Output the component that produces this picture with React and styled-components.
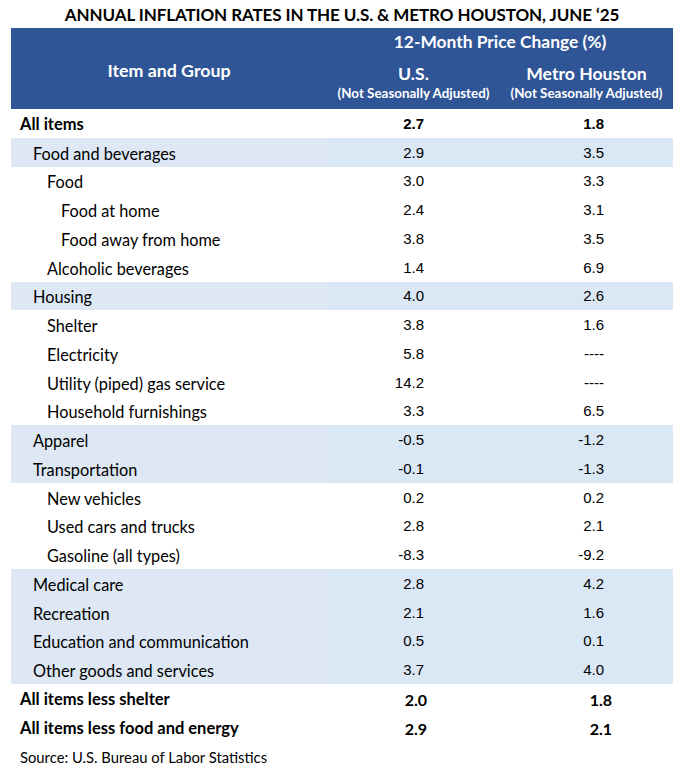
import React from "react";
import styled, { createGlobalStyle } from "styled-components";

const Global = createGlobalStyle`
  html, body { margin: 0; padding: 0; background: #ffffff; }
  body { font-family: Lato, "Open Sans", sans-serif; color: #000; }
`;

const Page = styled.div`
  width: 683px;
  padding: 0 10px 0 11px;
  box-sizing: border-box;
`;

const Title = styled.h1`
  margin: 0;
  height: 28px;
  display: flex;
  align-items: center;
  justify-content: center;
  font-family: Lato, sans-serif;
  font-weight: 700;
  font-size: 17px;
  letter-spacing: -0.1px;
  white-space: nowrap;
`;

const Head = styled.div`
  display: grid;
  grid-template-columns: 316px 173px 173px;
  grid-template-rows: 27px 31px 23px;
  height: 81px;
  background: #2f5597;
  color: #fff;
  font-weight: 700;
`;

const ItemHead = styled.div`
  grid-row: 1 / 4;
  display: flex;
  align-items: center;
  justify-content: center;
  padding-top: 2px;
  font-size: 17.8px;
`;

const SpanHead = styled.div`
  grid-column: 2 / 4;
  display: flex;
  align-items: center;
  justify-content: center;
  font-size: 17.4px;
  white-space: nowrap;
`;

const ColHead = styled.div`
  display: flex;
  align-items: ${(p) => (p.$sub ? "flex-start" : "center")};
  justify-content: center;
  font-size: ${(p) => (p.$sub ? "13.4px" : "17.6px")};
  line-height: ${(p) => (p.$sub ? "14px" : "normal")};
  padding-top: ${(p) => (p.$sub ? "0" : "5px")};
  white-space: nowrap;
`;

const Row = styled.div`
  display: grid;
  grid-template-columns: 316px 173px 173px;
  height: 28.75px;
  align-items: center;
  background: ${(p) => (p.$shade ? "#dae7f5" : "#fff")};
`;

const Label = styled.div`
  height: 100%;
  box-sizing: border-box;
  display: flex;
  align-items: center;
  padding-left: ${(p) => [9, 22, 36, 50][p.$level]}px;
  padding-top: 2px;
  font-size: ${(p) => (p.$bold ? "16.5px" : "16.3px")};
  font-weight: ${(p) => (p.$bold ? 700 : 400)};
  background: ${(p) => (p.$shade ? "#dde8f4" : "transparent")};
  white-space: nowrap;
`;

const Num = styled.div`
  text-align: right;
  padding-right: ${(p) => p.$pad}px;
  padding-top: ${(p) => (p.$alt ? "2px" : "0")};
  font-family: ${(p) =>
    p.$alt ? "Lato, sans-serif" : '"Liberation Sans", Arial, sans-serif'};
  font-size: ${(p) => (p.$alt ? "16px" : "15px")};
  font-weight: ${(p) => (p.$bold ? 700 : 400)};
`;

const Source = styled.div`
  height: 30px;
  display: flex;
  align-items: center;
  padding-left: 9px;
  font-size: 14.8px;
`;

const rows = [
  { l: "All items", lv: 0, b: true, us: "2.7", h: "1.8" },
  { l: "Food and beverages", lv: 1, s: true, us: "2.9", h: "3.5" },
  { l: "Food", lv: 2, us: "3.0", h: "3.3" },
  { l: "Food at home", lv: 3, us: "2.4", h: "3.1" },
  { l: "Food away from home", lv: 3, us: "3.8", h: "3.5" },
  { l: "Alcoholic beverages", lv: 2, us: "1.4", h: "6.9" },
  { l: "Housing", lv: 1, s: true, us: "4.0", h: "2.6" },
  { l: "Shelter", lv: 2, us: "3.8", h: "1.6" },
  { l: "Electricity", lv: 2, us: "5.8", h: "----" },
  { l: "Utility (piped) gas service", lv: 2, us: "14.2", h: "----" },
  { l: "Household furnishings", lv: 2, us: "3.3", h: "6.5" },
  { l: "Apparel", lv: 1, s: true, us: "-0.5", h: "-1.2" },
  { l: "Transportation", lv: 1, s: true, us: "-0.1", h: "-1.3" },
  { l: "New vehicles", lv: 2, us: "0.2", h: "0.2" },
  { l: "Used cars and trucks", lv: 2, us: "2.8", h: "2.1" },
  { l: "Gasoline (all types)", lv: 2, us: "-8.3", h: "-9.2" },
  { l: "Medical care", lv: 1, s: true, us: "2.8", h: "4.2" },
  { l: "Recreation", lv: 1, s: true, us: "2.1", h: "1.6" },
  { l: "Education and communication", lv: 1, s: true, us: "0.5", h: "0.1" },
  { l: "Other goods and services", lv: 1, s: true, us: "3.7", h: "4.0" },
  { l: "All items less shelter", lv: 0, b: true, alt: true, us: "2.0", h: "1.8" },
  { l: "All items less food and energy", lv: 0, b: true, alt: true, us: "2.9", h: "2.1" },
];

export default function App() {
  return (
    <Page>
      <Global />
      <Title>ANNUAL INFLATION RATES IN THE U.S. &amp; METRO HOUSTON, JUNE ‘25</Title>
      <Head>
        <ItemHead>Item and Group</ItemHead>
        <SpanHead>12-Month Price Change (%)</SpanHead>
        <ColHead>U.S.</ColHead>
        <ColHead>Metro Houston</ColHead>
        <ColHead $sub>(Not Seasonally Adjusted)</ColHead>
        <ColHead $sub>(Not Seasonally Adjusted)</ColHead>
      </Head>
      {rows.map((r) => (
        <Row key={r.l} $shade={r.s}>
          <Label $level={r.lv} $bold={r.b} $shade={r.s}>
            {r.l}
          </Label>
          <Num $pad={r.alt ? 73 : 76} $bold={r.b} $alt={r.alt}>
            {r.us}
          </Num>
          <Num $pad={r.alt ? 61 : 69} $bold={r.b} $alt={r.alt}>
            {r.h}
          </Num>
        </Row>
      ))}
      <Source>Source: U.S. Bureau of Labor Statistics</Source>
    </Page>
  );
}
